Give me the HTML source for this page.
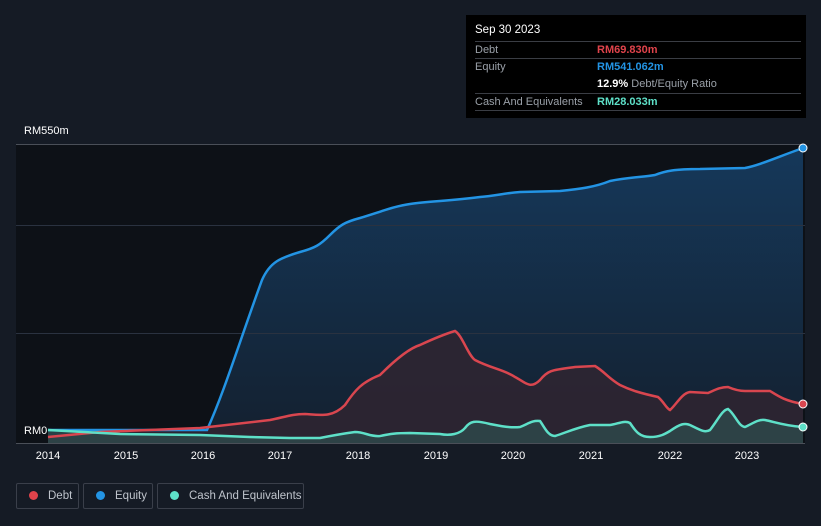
<!DOCTYPE html><html><head><style>
body{margin:0;width:821px;height:526px;background:#151b25;font-family:"Liberation Sans",sans-serif;overflow:hidden;position:relative}
.t{position:absolute;left:466px;top:15px;width:340px;height:103px;background:#000;color:#fff;font-size:11px}
.r{position:absolute;left:9px;width:326px;border-top:1px solid #3a3d44;height:17px;line-height:17px;color:#9aa0a8}
.r span{position:absolute;left:122px}
.leg{position:absolute;top:483px;height:26px;border:1px solid #3a3f4a;border-radius:2px;color:#bfc4cc;font-size:11.5px;line-height:24px;box-sizing:border-box;white-space:nowrap}
.leg i{display:inline-block;width:9px;height:9px;border-radius:50%;margin:0 10px 0 12px;vertical-align:-1px}
.yl{position:absolute;color:#fff;font-size:11px}
.xl{position:absolute;top:450px;color:#fff;font-size:11px;width:40px;text-align:center}
</style></head><body>
<svg width="821" height="526" style="position:absolute;left:0;top:0">
<defs><linearGradient id="eg" x1="0" y1="0" x2="0" y2="1"><stop offset="0" stop-color="#15385a"/><stop offset="1" stop-color="#14202f"/></linearGradient></defs>
<rect x="16" y="145" width="789" height="298" fill="#0d1117"/>
<path d="M48,430 L207,430 C225,390 240,340 262,280 C270,262 280,258 300,252 C315,248 320,245 330,235 C340,225 345,222 360,218 C380,212 395,206 410,204 C430,201 450,201 480,197 C495,196 505,193 520,192 L560,191 C580,189 595,187 610,181 C630,177 645,177 655,175 C665,171 675,169 700,169 L745,168 C760,165 775,158 803,148 L803,443 L48,443Z" fill="url(#eg)"/>
<path d="M48,437 L100,432 L200,428 L270,420 C285,417 292,414 305,414 C320,415 332,418 345,405 C355,390 362,382 380,375 C395,360 410,348 420,345 C435,338 445,334 455,331 C462,335 468,355 475,360 C490,368 505,370 515,377 C525,382 530,390 540,380 C548,370 552,370 575,367 L595,366 C605,372 608,378 620,385 C630,390 640,393 658,397 C664,402 666,408 670,410 C676,405 682,393 690,392 L708,393 C715,390 720,387 728,387 C735,390 740,391 745,391 L770,391 C778,396 785,401 803,404 L803,443 L48,443Z" fill="#2c2532" opacity="0.95"/>
<path d="M48,430 L120,434 L200,435 L250,437 L290,438 L320,438 C330,436 340,434 355,432 C365,432 370,437 380,436 C390,434 395,433 410,433 L440,434 C450,436 460,434 465,428 C470,421 475,420 490,424 C500,426 510,428 520,427 C528,424 532,420 540,421 C545,428 548,436 555,436 C565,433 575,428 590,425 L610,425 C618,424 624,420 630,423 C636,432 640,437 650,437 C660,437 665,434 670,431 C680,424 685,422 692,426 C700,430 705,433 710,430 C718,420 722,410 728,409 C735,414 738,426 745,427 C752,424 758,419 765,420 C775,422 785,426 803,427 L803,443 L48,443Z" fill="#2e4a4c" opacity="0.8"/>
<g stroke="#2a3240" stroke-width="1"><line x1="16" y1="225.5" x2="805" y2="225.5"/><line x1="16" y1="333.5" x2="805" y2="333.5"/></g>
<line x1="16" y1="144.5" x2="805" y2="144.5" stroke="#4a4f58"/>
<line x1="16" y1="443.5" x2="805" y2="443.5" stroke="#4a4f58"/>
<path d="M48,430 L207,430 C225,390 240,340 262,280 C270,262 280,258 300,252 C315,248 320,245 330,235 C340,225 345,222 360,218 C380,212 395,206 410,204 C430,201 450,201 480,197 C495,196 505,193 520,192 L560,191 C580,189 595,187 610,181 C630,177 645,177 655,175 C665,171 675,169 700,169 L745,168 C760,165 775,158 803,148" fill="none" stroke="#2394e4" stroke-width="2.5"/>
<path d="M48,437 L100,432 L200,428 L270,420 C285,417 292,414 305,414 C320,415 332,418 345,405 C355,390 362,382 380,375 C395,360 410,348 420,345 C435,338 445,334 455,331 C462,335 468,355 475,360 C490,368 505,370 515,377 C525,382 530,390 540,380 C548,370 552,370 575,367 L595,366 C605,372 608,378 620,385 C630,390 640,393 658,397 C664,402 666,408 670,410 C676,405 682,393 690,392 L708,393 C715,390 720,387 728,387 C735,390 740,391 745,391 L770,391 C778,396 785,401 803,404" fill="none" stroke="#d9464f" stroke-width="2.5"/>
<path d="M48,430 L120,434 L200,435 L250,437 L290,438 L320,438 C330,436 340,434 355,432 C365,432 370,437 380,436 C390,434 395,433 410,433 L440,434 C450,436 460,434 465,428 C470,421 475,420 490,424 C500,426 510,428 520,427 C528,424 532,420 540,421 C545,428 548,436 555,436 C565,433 575,428 590,425 L610,425 C618,424 624,420 630,423 C636,432 640,437 650,437 C660,437 665,434 670,431 C680,424 685,422 692,426 C700,430 705,433 710,430 C718,420 722,410 728,409 C735,414 738,426 745,427 C752,424 758,419 765,420 C775,422 785,426 803,427" fill="none" stroke="#5ee0c8" stroke-width="2.5"/>
<circle cx="803" cy="148" r="4" fill="#2394e4" stroke="#fff" stroke-width="1"/>
<circle cx="803" cy="404" r="4" fill="#d9464f" stroke="#fff" stroke-width="1"/>
<circle cx="803" cy="427" r="4" fill="#5ee0c8" stroke="#fff" stroke-width="1"/>
</svg>
<div class="yl" style="left:24px;top:125px">RM550m</div>
<div class="yl" style="left:24px;top:425px">RM0</div>
<div class="xl" style="left:28px">2014</div><div class="xl" style="left:106px">2015</div><div class="xl" style="left:183px">2016</div><div class="xl" style="left:260px">2017</div><div class="xl" style="left:338px">2018</div><div class="xl" style="left:416px">2019</div><div class="xl" style="left:493px">2020</div><div class="xl" style="left:571px">2021</div><div class="xl" style="left:650px">2022</div><div class="xl" style="left:727px">2023</div>
<div class="t">
<div style="position:absolute;left:9px;top:9px;font-size:11.5px">Sep 30 2023</div>
<div class="r" style="top:26px">Debt<span style="color:#e0434b;font-weight:bold">RM69.830m</span></div>
<div class="r" style="top:43px">Equity<span style="color:#2394e4;font-weight:bold">RM541.062m</span></div>
<div class="r" style="top:61px;border-top:none"><span><b style="color:#fff">12.9%</b> Debt/Equity Ratio</span></div>
<div class="r" style="top:78px">Cash And Equivalents<span style="color:#5ee0c8;font-weight:bold">RM28.033m</span></div>
<div class="r" style="top:95px;height:0"></div>
</div>
<div class="leg" style="left:16px;width:63px"><i style="background:#e0434b"></i>Debt</div>
<div class="leg" style="left:83px;width:70px"><i style="background:#2394e4"></i>Equity</div>
<div class="leg" style="left:157px;width:147px"><i style="background:#5ee0c8"></i>Cash And Equivalents</div>
</body></html>
